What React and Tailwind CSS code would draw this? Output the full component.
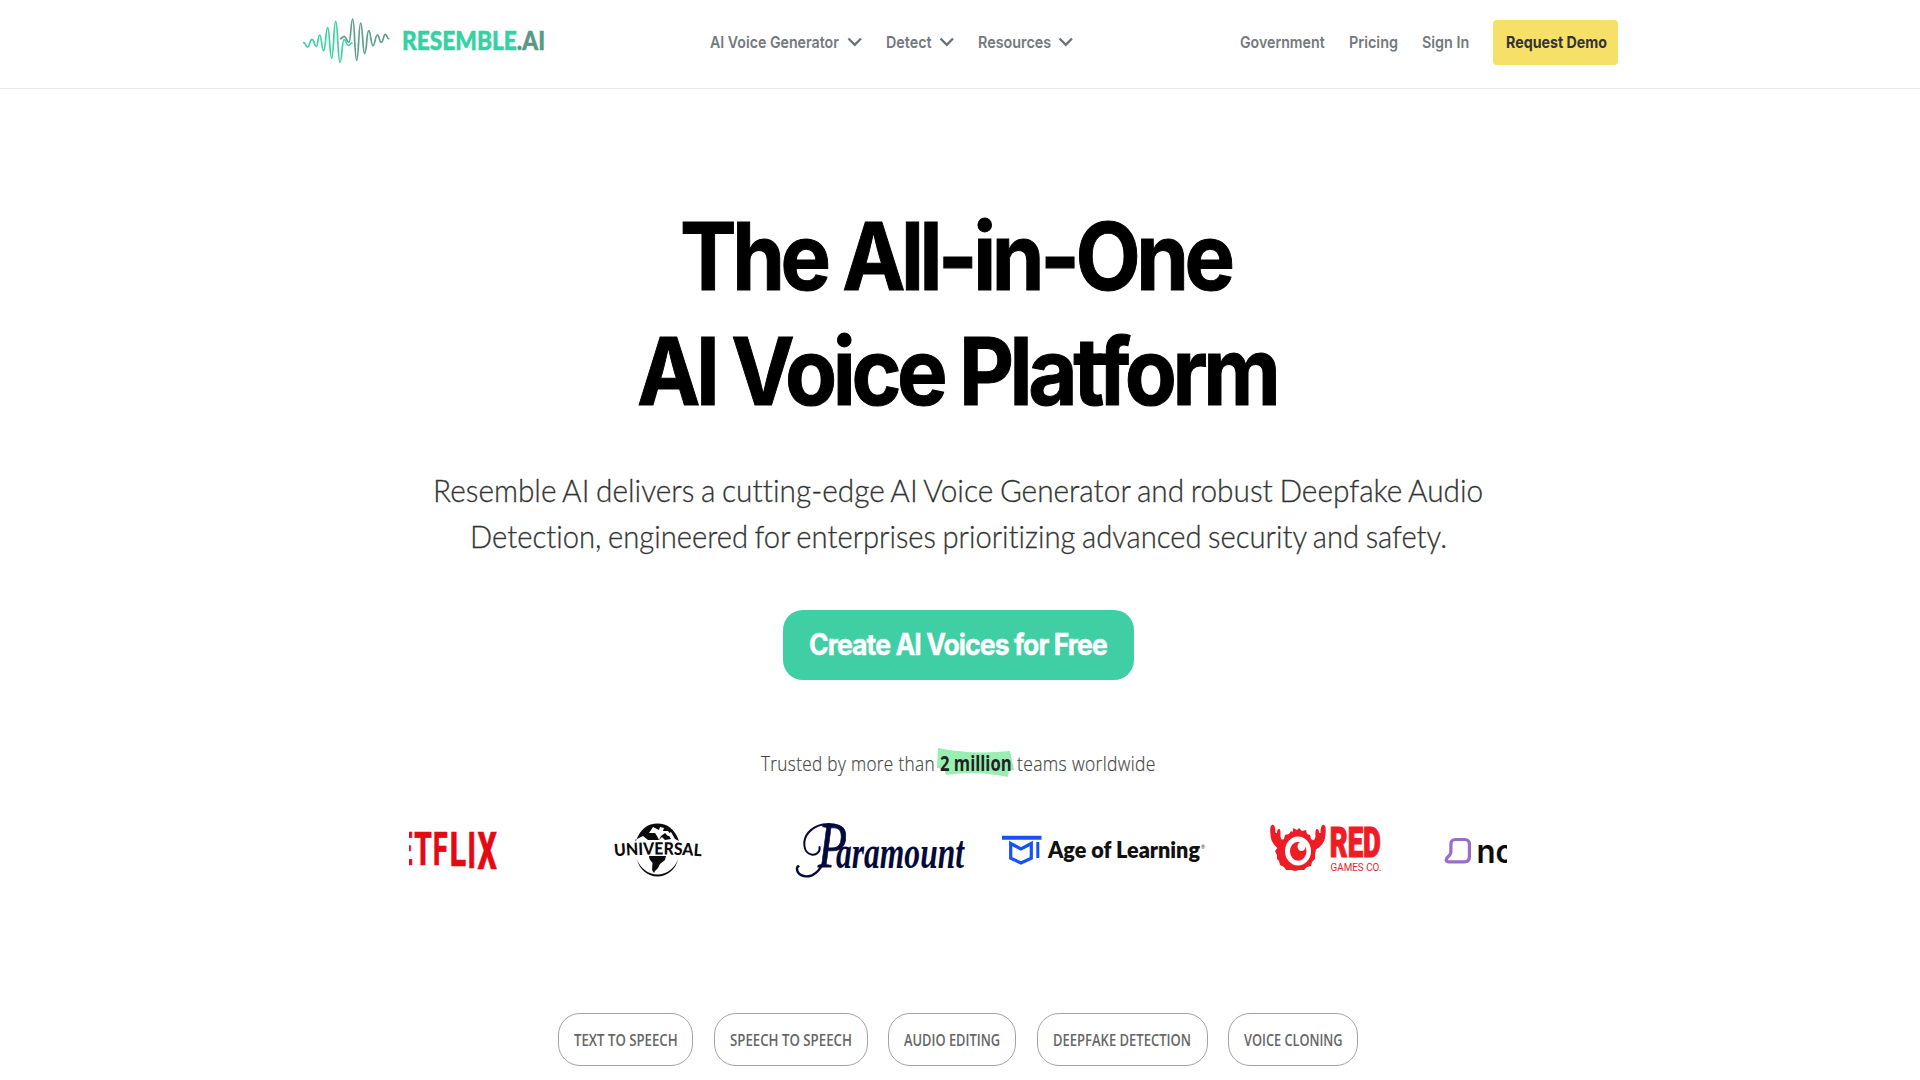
import { useLayoutEffect, useRef } from "react";

/* Text line drawn in a condensed cut: squeezed horizontally to the width of its box. */
function Condensed({ className = "", children }) {
  const box = useRef(null);
  const text = useRef(null);
  useLayoutEffect(() => {
    const scale = box.current.clientWidth / text.current.offsetWidth;
    text.current.style.transform = `scaleX(${scale})`;
  }, []);
  return (
    <span ref={box} className={`block shrink-0 whitespace-nowrap ${className}`}>
      <span ref={text} className="inline-block origin-left">{children}</span>
    </span>
  );
}

/* Smooth wave through alternating peaks and dips. */
function wavePath(points) {
  return points.reduce((d, [x, y], i) => {
    if (i === 0) return `M${x} ${y}`;
    const [px, py] = points[i - 1];
    const m = (px + x) / 2;
    return `${d}C${m} ${py} ${m} ${y} ${x} ${y}`;
  }, "");
}

const GREEN_WAVE = [[41, 128], [53, 141], [66, 118], [79, 139], [89, 105], [101, 152], [113, 83], [125, 175], [137, 64], [150, 187], [162, 119], [175, 136], [186, 129]];
const GREY_WAVE = [[152, 116], [162, 109], [177, 127], [188, 57], [200, 181], [212, 69], [224, 161], [236, 92], [249, 137], [262, 105], [274, 127], [286, 103], [296, 116]];

function WaveMark() {
  return (
    <svg className="h-[47px] w-[88px] shrink-0" viewBox="39 51 264 141" fill="none" strokeWidth="5" strokeLinecap="round">
      <path d={wavePath(GREEN_WAVE)} stroke="#3fd0a4" />
      <path d={wavePath(GREY_WAVE)} stroke="#5d9f88" />
    </svg>
  );
}

function Chevron() {
  return (
    <svg className="h-[10px] w-[16px] shrink-0" viewBox="0 0 16 10" fill="none">
      <path d="M1.500 1.500 7.800 7.800l6.200-6.300" stroke="#6b7074" strokeWidth="2.300" />
    </svg>
  );
}

function Glyphs({ x, y, w, size, children, ...rest }) {
  return (
    <text x={x} y={y} fontSize={size} textLength={w} lengthAdjust="spacingAndGlyphs" {...rest}>
      {children}
    </text>
  );
}

function Netflix() {
  return (
    <svg className="h-[70px] w-[89px] shrink-0" viewBox="409 815 89 70" fill="#e50914" stroke="#e50914" strokeWidth="0.600" fontFamily="Roboto, sans-serif" fontWeight="800">
      <Glyphs x="397.5" y="864.5" w="15" size="45.5">E</Glyphs>
      <Glyphs x="414.2" y="864.7" w="17.6" size="45.5">T</Glyphs>
      <Glyphs x="433" y="865.2" w="14.6" size="46">F</Glyphs>
      <Glyphs x="449.8" y="866" w="16.4" size="47.5">L</Glyphs>
      <Glyphs x="467.4" y="867.5" w="8.4" size="49.5">I</Glyphs>
      <Glyphs x="477.6" y="869.3" w="19.4" size="52.5">X</Glyphs>
    </svg>
  );
}

function Universal() {
  return (
    <svg className="h-[70px] w-[90px] shrink-0" viewBox="613 815 90 70">
      <path d="M636 841c4-12 12-17.500 21.500-17.500S675 829 679 841l-4-2-4-7-3 2 3 5-6 1-3-3-3 3-11 0-5-4-8 4z" fill="#0b0b0b" />
      <path d="M653 827l6 3 1-3 4 1-1 3 5 0 3 4-3 1-3-3-4 3-2 4-2-4-2-3-6 0z" fill="#fff" />
      <path d="M636.500 858.500c3 11.500 11.500 18 21 18s18-6.500 21-18c-3.500 9.500-11.500 16-21 16s-17.500-6.500-21-16z" fill="#0b0b0b" />
      <path d="M649 856h17l-1 4-5 4-2 4-3 3-1 2-2-3 .5-7-3-4z" fill="#0b0b0b" />
      <path id="universal-arc" d="M614.500 856.400Q658.500 852.600 702.500 856.400" fill="none" />
      <text fontFamily="Lato, sans-serif" fontWeight="900" fontSize="17" fill="#0b0b0b" stroke="#fff" strokeWidth="2" paintOrder="stroke">
        <textPath href="#universal-arc" textLength="87" lengthAdjust="spacingAndGlyphs">UNIVERSAL</textPath>
      </text>
    </svg>
  );
}

function Paramount() {
  return (
    <svg className="h-[70px] w-[172px] shrink-0" viewBox="794 815 172 70" fill="#040b3c" fontFamily="'Liberation Serif', serif" fontStyle="italic" fontWeight="700">
      <g fill="none" stroke="#040b3c" strokeLinecap="round">
        <path d="M824 862C821 868 817 873 812 875.300C803 878.500 797 874 797 868.500C797 866.500 798 866 798.500 866.500" strokeWidth="2.400" />
        <path d="M819.500 847C820.500 852 816 855.500 811.500 854.500C803 853 802 840 808.500 832.500C816 824 829 822 839 826" strokeWidth="2" />
      </g>
      <Glyphs x="818" y="867" w="29" size="63" fontWeight="400" stroke="#040b3c" strokeWidth="0.800">P</Glyphs>
      <Glyphs x="836" y="868" w="128" size="46">aramount</Glyphs>
    </svg>
  );
}

function AgeOfLearning() {
  return (
    <svg className="h-[70px] w-[205px] shrink-0" viewBox="1001 815 205 70">
      <g fill="none" stroke="#1553f5">
        <path d="M1002 837.700h39.500" strokeWidth="4" />
        <path d="M1010.700 843.500v14.700l10.300 4.800 10.300-4.800v-14.700l-10.300 5.500z" strokeWidth="3.200" />
        <path d="M1037.800 842v16" strokeWidth="3" />
      </g>
      <Glyphs x="1048" y="858" w="152" size="22.500" fill="#111" fontFamily="Lato, sans-serif" fontWeight="800">Age of Learning</Glyphs>
      <text x="1201" y="849" fontSize="5" fill="#333" fontFamily="Lato, sans-serif">®</text>
    </svg>
  );
}

function RedGames() {
  return (
    <svg className="h-[70px] w-[114px] shrink-0" viewBox="1269 815 114 70">
      <g fill="#ee1c25">
        <path d="M1281 850c-6-3-10-8-10.500-15-.500-6-.500-9 1.500-10s3.500 2 3.500 8l1.500 0c0-3 .8-4 2-4s1.800 2 1.500 7c0 3 2 5 5 5z" />
        <path d="M1315 850c6-3 10-8 10.500-15 .500-6 .500-9-1.500-10s-3.500 2-3.500 8l-1.500 0c0-3-.8-4-2-4s-1.800 2-1.500 7c0 3-2 5-5 5z" />
        <path d="M1279 846l2-6 3-1 1-4 4-1 2-3 2 1 0-4 4 2 2-2 3 3 4-1 1 4 3 1 1 4 3 2 1 5 1 4-1 4 0 5-3 3-1 4-4 1-3 3-5 0-4 1-4-1-5 0-2-3-4-2-1-4-2-2 0-4-2-4z" />
      </g>
      <ellipse cx="1298" cy="851" rx="13" ry="14.500" fill="#fff" />
      <ellipse cx="1298.200" cy="851.200" rx="8.200" ry="9.500" fill="#ee1c25" />
      <ellipse cx="1301.500" cy="846.500" rx="4" ry="4.500" fill="#fff" />
      <path d="M1298 842c3 0 5 2 4 6 2-1 3-2 4-4l-2-4z" fill="#fff" />
      <Glyphs x="1329.800" y="857" w="51" size="42" fill="#ee1c25" stroke="#ee1c25" strokeWidth="1.200" fontFamily="Roboto, sans-serif" fontWeight="900">RED</Glyphs>
      <Glyphs x="1330.500" y="870.800" w="51" size="11.500" fill="#ee1c25" fontFamily="Roboto, sans-serif" fontWeight="400">GAMES CO.</Glyphs>
    </svg>
  );
}

function Noom() {
  return (
    <svg className="h-[70px] w-[64px] shrink-0" viewBox="1443 815 64 70">
      <path d="M1455.500 839.500h9q4.900 0 4.900 5v12q0 5.300-5 5.300h-15.900q-3.500-.300-1.700-3.600l2.800-3q1.300-1.500 1.300-3.700v-7q0-5 4.600-5z" fill="none" stroke="#9a6bcb" strokeWidth="3.200" strokeLinejoin="round" />
      <Glyphs x="1476.500" y="863" w="38" size="32" fill="#0b0b0b" fontFamily="Inter, sans-serif" fontWeight="600">no</Glyphs>
    </svg>
  );
}

function Header() {
  return (
    <header className="flex h-[89px] items-start border-b border-[#e9e9e9] pl-[303px] font-[Inter,sans-serif] text-[16.500px] font-semibold leading-[24px] text-[#75797d]">
      <a className="mt-[17px] flex h-[47px] items-center">
        <WaveMark />
        <Condensed className="-mt-[2px] ml-[11px] w-[143px] font-[Lato,sans-serif] text-[26.500px] font-black leading-[34px] text-[#34d1a2] [-webkit-text-stroke:0.500px]">
          RESEMBLE<span className="text-[#579a84]">.AI</span>
        </Condensed>
      </a>
      <nav className="mt-[20px] flex h-[44px] items-center pl-[165px]">
        <Condensed className="w-[129px]">AI Voice Generator</Condensed>
        <span className="ml-[8px] mr-[23px]"><Chevron /></span>
        <Condensed className="w-[46px]">Detect</Condensed>
        <span className="ml-[7px] mr-[23px]"><Chevron /></span>
        <Condensed className="w-[73px]">Resources</Condensed>
        <span className="ml-[7px]"><Chevron /></span>
      </nav>
      <nav className="mt-[20px] flex h-[44px] items-center pl-[166px]">
        <Condensed className="w-[85px]">Government</Condensed>
        <Condensed className="ml-[24px] w-[49px]">Pricing</Condensed>
        <Condensed className="ml-[24px] w-[47px]">Sign In</Condensed>
        <a className="ml-[24px] flex h-[45px] w-[125px] items-center justify-center rounded-[4px] bg-[#f7e067] pl-px font-bold text-[#333]">
          <Condensed className="w-[101px]">Request Demo</Condensed>
        </a>
      </nav>
    </header>
  );
}

const PILLS = [
  ["TEXT TO SPEECH", "w-[135px]", "w-[104px]"],
  ["SPEECH TO SPEECH", "w-[154px]", "w-[122px]"],
  ["AUDIO EDITING", "w-[128px]", "w-[96px]"],
  ["DEEPFAKE DETECTION", "w-[171px]", "w-[138px]"],
  ["VOICE CLONING", "w-[130px]", "w-[99px]"],
];

export default function App() {
  return (
    <div className="h-[1080px] w-[1920px] overflow-hidden bg-white">
      <Header />
      <main className="flex w-[1916px] flex-col items-center">
        <h1 className="mt-[110px] flex flex-col items-center font-[Inter,sans-serif] text-[93px] font-bold leading-[114.500px] tracking-[-0.052em] text-black [-webkit-text-stroke:1px_black]">
          <Condensed className="-ml-[5px] w-[551px]">The All-in-One</Condensed>
          <Condensed className="-ml-[4px] w-[639px]">AI Voice Platform</Condensed>
        </h1>
        <p className="mt-[39px] flex flex-col items-center font-[Lato,sans-serif] text-[32px] font-light leading-[46px] text-[#333] [-webkit-text-stroke:0.300px] [font-variant-ligatures:none] [word-spacing:-0.050em]">
          <Condensed className="w-[1050px]">Resemble AI delivers a cutting-edge AI Voice Generator and robust Deepfake Audio</Condensed>
          <Condensed className="w-[977px]">Detection, engineered for enterprises prioritizing advanced security and safety.</Condensed>
        </p>
        <a className="mt-[51px] flex h-[70px] w-[351px] items-center justify-center rounded-[20px] bg-[#40cfa5] pb-[2px] font-[Inter,sans-serif] text-[29.500px] font-bold leading-[40px] tracking-[-0.035em] text-white [-webkit-text-stroke:0.400px]">
          <Condensed className="w-[298px]">Create AI Voices for Free</Condensed>
        </a>
        <p className="mt-[68px] flex font-['Open_Sans',sans-serif] text-[21px] font-light leading-[30px] text-[#444]">
          <Condensed className="w-[174px] tracking-[0.02em] [-webkit-text-stroke:0.200px]">Trusted by more than</Condensed>
          <span className="relative ml-[5px] mr-[5px]">
            <svg className="absolute -left-[3px] -top-[1px] h-[31px] w-[78px]" viewBox="0 0 78 31">
              <path d="M1 1Q35 8 73 4L77 23 72 24 71 30Q38 23 9 28L7 22 0 21z" fill="#98efb1" />
            </svg>
            <Condensed className="relative w-[72px] font-bold text-[#222]">2 million</Condensed>
          </span>
          <Condensed className="w-[139px] tracking-[0.02em] [-webkit-text-stroke:0.200px]">teams worldwide</Condensed>
        </p>
        <div className="mt-[37px] flex w-[1098px] overflow-hidden">
          <Netflix />
          <div className="ml-[115px]"><Universal /></div>
          <div className="ml-[91px]"><Paramount /></div>
          <div className="ml-[35px]"><AgeOfLearning /></div>
          <div className="ml-[63px]"><RedGames /></div>
          <div className="ml-[60px]"><Noom /></div>
        </div>
        <div className="mt-[128px] flex gap-[20.500px] font-['Open_Sans',sans-serif] text-[16.500px] font-semibold leading-[24px] text-[#666]">
          {PILLS.map(([label, pill, text]) => (
            <a key={label} className={`flex h-[53px] shrink-0 items-center justify-center rounded-[22px] border border-[#a3a3a3] ${pill}`}>
              <Condensed className={text}>{label}</Condensed>
            </a>
          ))}
        </div>
      </main>
    </div>
  );
}
